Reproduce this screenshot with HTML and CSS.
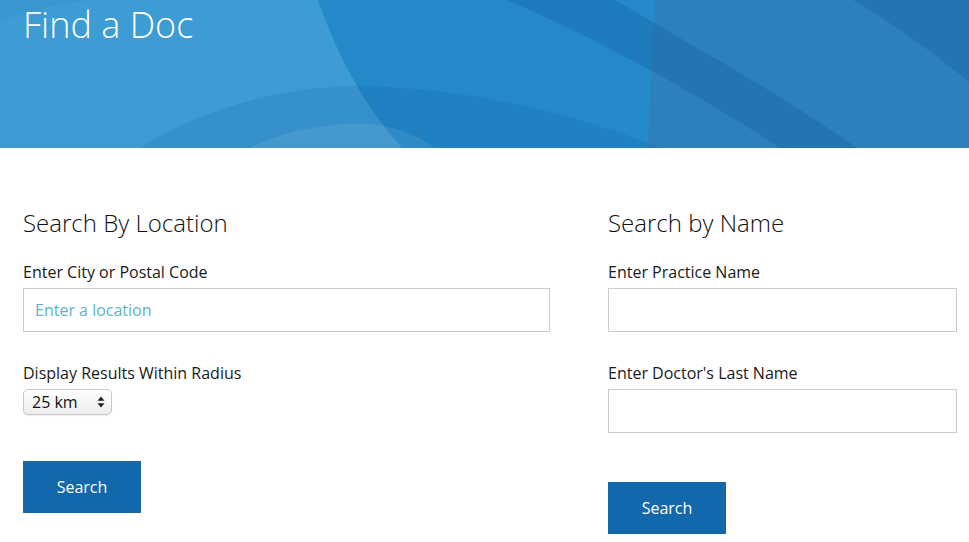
FILE: index.html
```html
<!DOCTYPE html>
<html lang="en">
<head>
<meta charset="utf-8">
<title>Find a Doc</title>
<link rel="stylesheet" href="styles.css">
</head>
<body>
<header class="banner">
  <svg class="banner-art" viewBox="0 0 969 148" preserveAspectRatio="none" aria-hidden="true">
    <rect x="0" y="0" width="969" height="148" fill="#2389c9"/>
    <path d="M0,0 L318,0 C338,58 366,108 402,148 L0,148 Z" fill="#3d9cd4"/>
    <path d="M0,22 C30,10 60,3 95,0 L0,0 Z" fill="rgba(0,60,130,0.05)"/>
    <path d="M655,0 L969,0 L969,148 L648,148 Z" fill="#2c81bd"/>
    <path d="M507,0 L615,0 C700,50 790,100 857,148 L780,148 C700,95 600,40 507,0 Z" fill="rgba(0,50,120,0.16)"/>
    <path d="M853,0 L969,0 L969,82 C930,50 890,22 853,0 Z" fill="rgba(0,50,120,0.16)"/>
    <path d="M140,148 C200,110 280,86 360,86 C470,88 580,115 660,148 Z" fill="rgba(0,60,140,0.11)"/>
    <path d="M250,148 C290,128 335,122 370,124 C400,127 420,137 435,148 Z" fill="rgba(255,255,255,0.08)"/>
  </svg>
  <h1 class="banner-title">Find a Doc</h1>
</header>

<main class="content">
  <section class="col">
    <h2 class="col-title">Search By Location</h2>
    <label class="field-label" for="loc">Enter City or Postal Code</label>
    <input class="text-input" id="loc" type="text" placeholder="Enter a location">
    <label class="field-label field-label-next" for="radius">Display Results Within Radius</label>
    <div class="select-wrap">
      <select class="select" id="radius">
        <option>25 km</option>
        <option>50 km</option>
        <option>100 km</option>
      </select>
      <svg class="select-arrows" width="8" height="12" viewBox="0 0 8 12" aria-hidden="true">
        <path d="M4,0.5 L7.5,4.8 L0.5,4.8 Z" fill="#222"/>
        <path d="M4,11.5 L7.5,7.2 L0.5,7.2 Z" fill="#222"/>
      </svg>
    </div>
    <button class="btn btn-left" type="button">Search</button>
  </section>

  <section class="col">
    <h2 class="col-title">Search by Name</h2>
    <label class="field-label" for="practice">Enter Practice Name</label>
    <input class="text-input" id="practice" type="text">
    <label class="field-label field-label-next" for="lastname">Enter Doctor's Last Name</label>
    <input class="text-input" id="lastname" type="text">
    <button class="btn btn-right" type="button">Search</button>
  </section>
</main>
</body>
</html>
```

FILE: styles.css
```css
* {
  box-sizing: border-box;
}

html, body {
  margin: 0;
  padding: 0;
  background: #ffffff;
}

body {
  font-family: "Open Sans", "Liberation Sans", sans-serif;
  color: #1a1a1a;
}

.banner {
  position: relative;
  height: 148px;
  overflow: hidden;
  padding-left: 23px;
}

.banner-art {
  position: absolute;
  left: 0;
  top: 0;
  width: 100%;
  height: 100%;
  display: block;
}

.banner-title {
  position: relative;
  margin: 0;
  font-size: 36px;
  font-weight: 300;
  line-height: normal;
  color: #ffffff;
}

.content {
  display: grid;
  grid-template-columns: 527px 349px;
  column-gap: 58px;
  padding: 59px 12px 0 23px;
}

.col {
  display: flex;
  flex-direction: column;
  align-items: flex-start;
}

.col-title {
  margin: 0 0 23px;
  font-size: 24px;
  font-weight: 300;
  line-height: 32px;
  color: #111;
}

.field-label {
  display: block;
  font-size: 16px;
  line-height: 20px;
  margin-bottom: 6px;
  color: #1a1a1a;
}

.field-label-next {
  margin-top: 31px;
}

.text-input {
  width: 100%;
  height: 44px;
  border: 1px solid #cccccc;
  border-radius: 0;
  padding: 0 11px;
  font-family: inherit;
  font-size: 16px;
  color: #222;
  background: #fff;
  outline: none;
}

.text-input::placeholder {
  color: #5fb2ca;
  opacity: 1;
}

.select-wrap {
  position: relative;
  width: 89px;
  height: 26px;
}

.select {
  appearance: none;
  -webkit-appearance: none;
  width: 89px;
  height: 26px;
  margin: 0;
  padding: 0 0 0 8px;
  border: 1px solid #c9c9c9;
  border-radius: 5px;
  background: linear-gradient(#ffffff, #ececec);
  box-shadow: 0 1px 1px rgba(0, 0, 0, 0.08);
  font-family: inherit;
  font-size: 16px;
  line-height: 24px;
  color: #111;
}

.select-arrows {
  position: absolute;
  right: 7px;
  top: 7px;
  pointer-events: none;
}

.btn {
  width: 118px;
  height: 52px;
  border: 0;
  border-radius: 0;
  background: #1268aa;
  color: #ffffff;
  font-family: inherit;
  font-size: 16px;
  padding: 0;
  cursor: pointer;
}

.btn-left {
  margin-top: 46px;
}

.btn-right {
  margin-top: 49px;
}
```
